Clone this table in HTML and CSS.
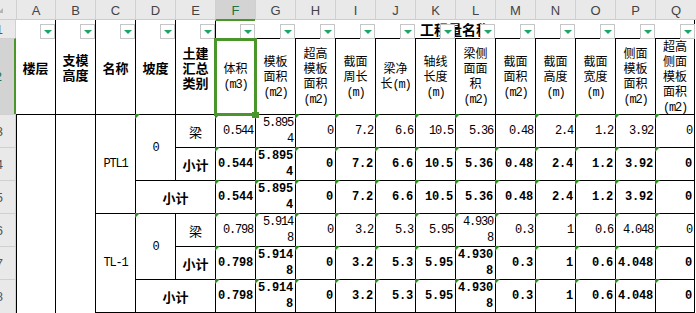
FILE: index.html
```html
<!DOCTYPE html>
<html lang="zh-CN">
<head>
<meta charset="utf-8">
<title>工程量汇总表</title>
<link rel="stylesheet" href="styles.css">
</head>
<body>
<div class="sheet">
  <!-- column headers -->
  <div class="ch corner"></div>
  <div class="ch">A</div><div class="ch">B</div><div class="ch">C</div><div class="ch">D</div><div class="ch">E</div>
  <div class="ch sel">F</div><div class="ch">G</div><div class="ch">H</div><div class="ch">I</div><div class="ch">J</div>
  <div class="ch">K</div><div class="ch">L</div><div class="ch">M</div><div class="ch">N</div><div class="ch">O</div>
  <div class="ch">P</div><div class="ch">Q</div>

  <!-- sheet row 1 -->
  <div class="rh first">1</div>
  <div class="hd nl">楼层<span class="fb"></span></div>
  <div class="hd">支模<br>高度<span class="fb"></span></div>
  <div class="hd">名称<span class="fb"></span></div>
  <div class="hd">坡度<span class="fb"></span></div>
  <div class="hd">土建<br>汇总<br>类别<span class="fb"></span></div>
  <div class="title">工程量名称
    <div class="strip">
      <div class="slot"><span class="fb"></span></div><div class="slot"><span class="fb"></span></div>
      <div class="slot"><span class="fb"></span></div><div class="slot"><span class="fb"></span></div>
      <div class="slot"><span class="fb"></span></div><div class="slot"><span class="fb"></span></div>
      <div class="slot"><span class="fb"></span></div><div class="slot"><span class="fb"></span></div>
      <div class="slot"><span class="fb"></span></div><div class="slot"><span class="fb"></span></div>
      <div class="slot"><span class="fb"></span></div><div class="slot"><span class="fb"></span></div>
    </div>
  </div>

  <!-- sheet row 2 -->
  <div class="rh sel">2</div>
  <div class="c hn selcell"><div>体积<br><span class="u">(m3)</span></div><span class="handle"></span></div>
  <div class="c hn"><div>模板<br>面积<br><span class="u">(m2)</span></div></div>
  <div class="c hn"><div>超高<br>模板<br>面积<br><span class="u">(m2)</span></div></div>
  <div class="c hn"><div>截面<br>周长<br><span class="u">(m)</span></div></div>
  <div class="c hn"><div>梁净<br>长<span class="u">(m)</span></div></div>
  <div class="c hn"><div>轴线<br>长度<br><span class="u">(m)</span></div></div>
  <div class="c hn"><div>梁侧<br>面面<br>积<br><span class="u">(m2)</span></div></div>
  <div class="c hn"><div>截面<br>面积<br><span class="u">(m2)</span></div></div>
  <div class="c hn"><div>截面<br>高度<br><span class="u">(m)</span></div></div>
  <div class="c hn"><div>截面<br>宽度<br><span class="u">(m)</span></div></div>
  <div class="c hn"><div>侧面<br>模板<br>面积<br><span class="u">(m2)</span></div></div>
  <div class="c hn q"><div>超高<br>侧面<br>模板<br>面积<br><span class="u">(m2)</span></div></div>

  <!-- sheet row 3 -->
  <div class="rh">3</div>
  <div class="c rs6"></div>
  <div class="c rs6"></div>
  <div class="c rs3 mc">PTL1</div>
  <div class="c rs2 mc e">0</div>
  <div class="c t">梁</div>
  <div class="c n e">0.544</div>
  <div class="c n e"><div>5.895<br>4</div></div>
  <div class="c n e">0</div>
  <div class="c n e">7.2</div>
  <div class="c n e">6.6</div>
  <div class="c n e">10.5</div>
  <div class="c n e">5.36</div>
  <div class="c n">0.48</div>
  <div class="c n e">2.4</div>
  <div class="c n e">1.2</div>
  <div class="c n e">3.92</div>
  <div class="c n e q">0</div>

  <!-- sheet row 4 -->
  <div class="rh">4</div>
  <div class="c t b">小计</div>
  <div class="c n b e">0.544</div>
  <div class="c n b e"><div>5.895<br>4</div></div>
  <div class="c n b e">0</div>
  <div class="c n b e">7.2</div>
  <div class="c n b e">6.6</div>
  <div class="c n b e">10.5</div>
  <div class="c n b e">5.36</div>
  <div class="c n b e">0.48</div>
  <div class="c n b e">2.4</div>
  <div class="c n b e">1.2</div>
  <div class="c n b e">3.92</div>
  <div class="c n b e q">0</div>

  <!-- sheet row 5 -->
  <div class="rh">5</div>
  <div class="c cs2 t b">小计</div>
  <div class="c n b e">0.544</div>
  <div class="c n b e"><div>5.895<br>4</div></div>
  <div class="c n b e">0</div>
  <div class="c n b e">7.2</div>
  <div class="c n b e">6.6</div>
  <div class="c n b e">10.5</div>
  <div class="c n b e">5.36</div>
  <div class="c n b e">0.48</div>
  <div class="c n b e">2.4</div>
  <div class="c n b e">1.2</div>
  <div class="c n b e">3.92</div>
  <div class="c n b e q">0</div>

  <!-- sheet row 6 -->
  <div class="rh">6</div>
  <div class="c rs3 mc bb">TL-1</div>
  <div class="c rs2 mc e">0</div>
  <div class="c t">梁</div>
  <div class="c n e">0.798</div>
  <div class="c n e"><div>5.914<br>8</div></div>
  <div class="c n e">0</div>
  <div class="c n e">3.2</div>
  <div class="c n e">5.3</div>
  <div class="c n e">5.95</div>
  <div class="c n e"><div>4.930<br>8</div></div>
  <div class="c n e">0.3</div>
  <div class="c n e">1</div>
  <div class="c n e">0.6</div>
  <div class="c n e">4.048</div>
  <div class="c n e q">0</div>

  <!-- sheet row 7 -->
  <div class="rh">7</div>
  <div class="c t b">小计</div>
  <div class="c n b e">0.798</div>
  <div class="c n b e"><div>5.914<br>8</div></div>
  <div class="c n b e">0</div>
  <div class="c n b e">3.2</div>
  <div class="c n b e">5.3</div>
  <div class="c n b e">5.95</div>
  <div class="c n b e"><div>4.930<br>8</div></div>
  <div class="c n b e">0.3</div>
  <div class="c n b e">1</div>
  <div class="c n b e">0.6</div>
  <div class="c n b e">4.048</div>
  <div class="c n b e q">0</div>

  <!-- sheet row 8 -->
  <div class="rh">8</div>
  <div class="c cs2 t b bb">小计</div>
  <div class="c n b e bb">0.798</div>
  <div class="c n b e bb"><div>5.914<br>8</div></div>
  <div class="c n b e bb">0</div>
  <div class="c n b e bb">3.2</div>
  <div class="c n b e bb">5.3</div>
  <div class="c n b e bb">5.95</div>
  <div class="c n b e bb"><div>4.930<br>8</div></div>
  <div class="c n b e bb">0.3</div>
  <div class="c n b e bb">1</div>
  <div class="c n b e bb">0.6</div>
  <div class="c n b e bb">4.048</div>
  <div class="c n b e bb q">0</div>
</div>
</body>
</html>
```
FILE: styles.css
```css
* { box-sizing: border-box; }
html, body { margin: 0; padding: 0; background: #fff; }
body {
  font-family: "Noto Sans CJK SC", "Liberation Sans", sans-serif;
  color: #000;
  width: 696px;
  height: 313px;
  overflow: hidden;
}

.sheet {
  display: grid;
  grid-template-columns: 16px 39px repeat(15, 40px) 41px;
  grid-template-rows: 20px 18px 76px repeat(5, 33px) 34px;
}

/* column headers */
.ch {
  background: #e9e9e9;
  border-left: 1px solid #d0d0d0;
  border-bottom: 1px solid #cdcdcd;
  font: 13px "Liberation Sans", Arial, sans-serif;
  color: #444;
  display: flex;
  align-items: center;
  justify-content: center;
  padding-top: 2px;
}
.ch.corner { border-left: 0; position: relative; overflow: hidden; }
.ch.corner::after {
  content: "";
  position: absolute;
  right: 13px;
  top: 8px;
  border-bottom: 5px solid #b5b5b5;
  border-left: 5px solid transparent;
}
.ch.sel {
  background: #d3d3d3;
  color: #217346;
  border-bottom: 2px solid #4a962a;
  margin-bottom: -1px;
  position: relative;
  z-index: 1;
}

/* row headers */
.rh {
  grid-column: 1;
  background: #e9e9e9;
  border-top: 1px solid #d0d0d0;
  border-right: 1px solid #d0d0d0;
  font: 13px "Liberation Sans", Arial, sans-serif;
  color: #555;
  display: flex;
  align-items: center;
  justify-content: flex-end;
  padding-right: 12px;
  overflow: hidden;
}
.rh.first { border-top: 0; }
.rh.sel {
  background: #d3d3d3;
  color: #217346;
  border-right: 2px solid #4a962a;
}

/* bold header cells (merged rows 1-2) */
.hd {
  grid-row: span 2;
  border-left: 1px solid #000;
  position: relative;
  display: flex;
  align-items: center;
  justify-content: center;
  text-align: center;
  font-weight: 700;
  font-size: 13px;
  line-height: 15px;
  background: #fff;
}
.hd.nl { border-left: 0; }

/* filter buttons */
.fb {
  position: absolute;
  right: 0;
  top: 0;
  width: 15px;
  height: 15px;
  border: 1px solid #c6c6c6;
  background: #fff;
  z-index: 2;
}
.hd > .fb { top: 4px; }
.fb::after {
  content: "";
  position: absolute;
  left: 3px;
  top: 5px;
  border-left: 4px solid transparent;
  border-right: 4px solid transparent;
  border-top: 4px solid #1fa463;
}

/* merged title F1:Q1 */
.title {
  grid-column: span 12;
  border-left: 1px solid #000;
  border-right: 1px solid #000;
  margin-right: 1px;
  position: relative;
  display: flex;
  align-items: center;
  justify-content: center;
  font-weight: 700;
  font-size: 14px;
  background: #fff;
}
.strip {
  position: absolute;
  left: -1px;
  right: -1px;
  top: 4px;
  display: flex;
}
.slot {
  flex: 0 0 40px;
  height: 15px;
  position: relative;
}

/* grid cells */
.c {
  border-left: 1px solid #000;
  border-top: 1px solid #000;
  position: relative;
  display: flex;
  align-items: center;
  justify-content: center;
  text-align: center;
  background: #fff;
}
.q { border-right: 1px solid #000; margin-right: 1px; }
.bb { border-bottom: 1px solid #000; }
.rs2 { grid-row: span 2; }
.rs3 { grid-row: span 3; }
.rs6 { grid-row: span 6; }
.cs2 { grid-column: span 2; }

.hn { font-size: 12px; line-height: 15px; }
.u { font-family: "Liberation Mono", monospace; letter-spacing: -1.2px; }

.t { font-size: 13px; }
.b { font-weight: 700; }

.mc {
  font-family: "Liberation Mono", monospace;
  font-size: 12px;
  letter-spacing: -1.2px;
}

.n {
  justify-content: flex-end;
  text-align: right;
  padding-right: 2px;
  font-family: "Liberation Mono", "Noto Sans CJK SC", monospace;
  font-size: 12px;
  line-height: 16px;
  letter-spacing: -1.2px;
}
.n.b { letter-spacing: -0.2px; }

/* error indicator triangles */
.e::before {
  content: "";
  position: absolute;
  left: -1px;
  top: -1px;
  border-top: 5px solid #2b8a22;
  border-right: 5px solid transparent;
}

/* active cell selection */
.selcell::after {
  content: "";
  position: absolute;
  left: -2px;
  top: -1px;
  right: -2px;
  bottom: -2px;
  border: 3px solid #4a962a;
  z-index: 3;
}
.handle {
  position: absolute;
  right: -4px;
  bottom: -4px;
  width: 7px;
  height: 6px;
  background: #4a962a;
  z-index: 4;
}
```
